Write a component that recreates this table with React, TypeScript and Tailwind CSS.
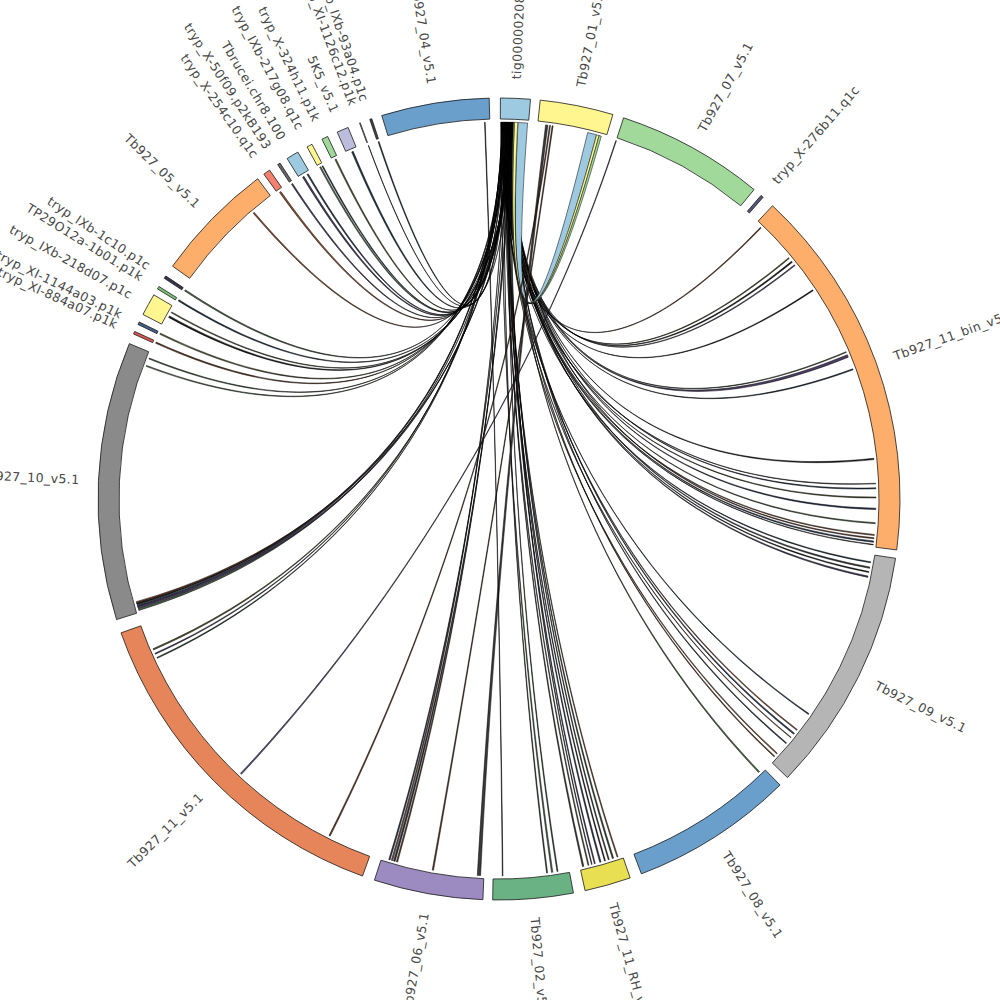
import React from "react";

// circos-style chord plot, everything drawn in one svg
const CX = 499;
const CY = 499;
const R_OUT = 401;
const R_IN = 380;
const R_LINK = 377;
const R_CTRL = 140;
const R_LABEL = 420;

interface Seg {
  a0: number;
  a1: number;
  fill: string;
  label: string;
}

const SEGS: Seg[] = [
  { a0: 0.2, a1: 4.5, fill: "#9ecae1", label: "tig00000208" },
  { a0: 5.9, a1: 16.5, fill: "#fff68f", label: "Tb927_01_v5.1" },
  { a0: 18.1, a1: 39.5, fill: "#a1d99b", label: "Tb927_07_v5.1" },
  { a0: 40.8, a1: 41.2, fill: "#55557a", label: "tryp_X-276b11.q1c" },
  { a0: 43.0, a1: 97.3, fill: "#fdae6b", label: "Tb927_11_bin_v5.1" },
  { a0: 98.5, a1: 134.0, fill: "#b5b5b5", label: "Tb927_09_v5.1" },
  { a0: 135.5, a1: 159.2, fill: "#6a9ecb", label: "Tb927_08_v5.1" },
  { a0: 160.9, a1: 167.6, fill: "#e9df52", label: "Tb927_11_RH_v5.1" },
  { a0: 169.3, a1: 180.9, fill: "#6ab283", label: "Tb927_02_v5.1" },
  { a0: 182.3, a1: 198.1, fill: "#9c8bc1", label: "Tb927_06_v5.1" },
  { a0: 199.9, a1: 250.5, fill: "#e6855a", label: "Tb927_11_v5.1" },
  { a0: 252.5, a1: 292.8, fill: "#8a8a8a", label: "Tb927_10_v5.1" },
  { a0: 294.3, a1: 294.7, fill: "#d9534f", label: "tryp_XI-884a07.p1k" },
  { a0: 295.8, a1: 296.2, fill: "#3f5f86", label: "tryp_XI-1144a03.p1k" },
  { a0: 297.4, a1: 300.6, fill: "#fff68f", label: "tryp_IXb-218d07.p1c" },
  { a0: 301.6, a1: 302.0, fill: "#7fbf7b", label: "TP29O12a-1b01.p1k" },
  { a0: 303.4, a1: 303.8, fill: "#33334d", label: "tryp_IXb-1c10.p1c" },
  { a0: 305.5, a1: 323.0, fill: "#fdae6b", label: "Tb927_05_v5.1" },
  { a0: 324.1, a1: 325.1, fill: "#f2806e", label: "tryp_X-254c10.q1c" },
  { a0: 326.5, a1: 326.9, fill: "#666666", label: "tryp_X-50f09.p2kB193" },
  { a0: 328.1, a1: 329.9, fill: "#9ecae1", label: "Tbrucei.chr8.100" },
  { a0: 331.4, a1: 332.2, fill: "#fff68f", label: "tryp_IXb-217g08.q1c" },
  { a0: 333.8, a1: 334.7, fill: "#a1d99b", label: "tryp_X-324h11.p1k" },
  { a0: 336.2, a1: 337.9, fill: "#bcbddc", label: "5K5_v5.1" },
  { a0: 339.65, a1: 339.75, fill: "#ffffff", label: "tryp_XI-1126c12.p1k" },
  { a0: 341.2, a1: 341.5, fill: "#444444", label: "tryp_IXb-93a04.p1c" },
  { a0: 343.0, a1: 358.6, fill: "#6a9ecb", label: "Tb927_04_v5.1" },
];

const FILLS = [
  "#1b1b1b",
  "#6b3a22",
  "#2e4a36",
  "#2a3a58",
  "#5c5a34",
  "#4b3d63",
  "#8a5030",
  "#3c3c3c",
  "#23374a",
  "#4f6b4a",
];

// far ends of the links that leave tig00000208: [angle, width]
const TIG_TARGETS: [number, number][] = [
  // Tb927_11_bin
  [43.9, 0.15], [50.2, 0.15], [50.9, 0.2], [51.6, 0.15], [56.3, 0.15],
  [67.0, 0.12], [67.5, 0.4], [69.8, 0.15], [83.8, 0.2], [87.6, 0.1],
  [88.3, 0.15], [89.7, 0.15], [91.4, 0.2], [93.6, 0.15], [95.4, 0.15],
  [95.9, 0.15], [96.4, 0.2], [96.9, 0.1],
  // Tb927_09
  [99.6, 0.15], [100.4, 0.2], [101.1, 0.15], [101.8, 0.2],
  [124.7, 0.15], [127.7, 0.15], [128.4, 0.2], [129.2, 0.1],
  [130.3, 0.15], [132.4, 0.15], [133.0, 0.15],
  // Tb927_08
  [136.3, 0.2],
  // Tb927_11_RH
  [161.6, 0.15], [162.3, 0.2], [163.0, 0.15], [163.6, 0.15],
  [164.3, 0.2], [165.2, 0.15], [165.7, 0.1], [166.2, 0.15], [167.0, 0.2],
  // Tb927_02
  [171.0, 0.15], [171.8, 0.2], [172.6, 0.15],
  // Tb927_06
  [195.6, 0.2], [196.0, 0.25], [196.4, 0.2], [196.8, 0.2],
  // Tb927_11
  [245.0, 0.15], [245.7, 0.15], [246.4, 0.2],
  // Tb927_10
  [252.8, 0.25], [253.1, 0.3], [253.4, 0.25], [253.7, 0.3],
  [254.0, 0.2], [290.6, 0.15], [291.8, 0.15],
  // small ones on the left
  [294.4, 0.2], [295.9, 0.2], [298.8, 0.25], [299.6, 0.15],
  [301.7, 0.2], [303.5, 0.2],
  // Tb927_05
  [319.3, 0.2],
  // small ones top left
  [324.4, 0.25], [326.6, 0.2], [328.6, 0.25], [329.4, 0.2],
  [331.6, 0.2], [332.0, 0.15], [334.2, 0.2], [337.0, 0.25],
  [339.7, 0.05], [341.3, 0.15],
];

// links that don't start on tig: [s0, s1, t0, t1, fill]
const OTHER_LINKS: [number, number, number, number, string][] = [
  [2.9, 4.35, 13.6, 15.0, "#9ecae1"],
  [2.35, 2.85, 15.0, 15.4, "#fff68f"],
  [2.2, 2.33, 15.4, 15.75, "#a1d99b"],
  [7.1, 7.45, 182.8, 183.3, "#3a3a3a"],
  [7.7, 7.85, 206.6, 206.8, "#6b3a22"],
  [8.1, 8.25, 190.0, 190.2, "#5a3a2a"],
  [18.05, 18.15, 223.1, 223.3, "#5a5080"],
  [357.8, 357.9, 179.4, 179.5, "#2a2a2a"],
];

const pt = (r: number, deg: number) => {
  const a = (deg * Math.PI) / 180;
  return [CX + r * Math.sin(a), CY - r * Math.cos(a)];
};

const P = (r: number, deg: number) => {
  const [x, y] = pt(r, deg);
  return `${x.toFixed(2)} ${y.toFixed(2)}`;
};

const segPath = (a0: number, a1: number) =>
  `M ${P(R_OUT, a0)} A ${R_OUT} ${R_OUT} 0 0 1 ${P(R_OUT, a1)} L ${P(R_IN, a1)} A ${R_IN} ${R_IN} 0 0 0 ${P(R_IN, a0)} Z`;

const linkPath = (s0: number, s1: number, t0: number, t1: number) =>
  `M ${P(R_LINK, s0)} A ${R_LINK} ${R_LINK} 0 0 1 ${P(R_LINK, s1)} ` +
  `C ${P(R_CTRL, s1)} ${P(R_CTRL, t0)} ${P(R_LINK, t0)} ` +
  `A ${R_LINK} ${R_LINK} 0 0 1 ${P(R_LINK, t1)} ` +
  `C ${P(R_CTRL, t1)} ${P(R_CTRL, s0)} ${P(R_LINK, s0)} Z`;

// small lcg so the order on tig is shuffled but stable
const buildTigLinks = () => {
  let seed = 17;
  const rnd = () => {
    seed = (seed * 1103515245 + 12345) % 2147483648;
    return seed / 2147483648;
  };
  const order = TIG_TARGETS.map((_, i) => i);
  for (let i = order.length - 1; i > 0; i--) {
    const j = Math.floor(rnd() * (i + 1));
    [order[i], order[j]] = [order[j], order[i]];
  }
  const start = 0.3;
  const step = (2.18 - start) / TIG_TARGETS.length;
  return order.map((ti, k) => {
    const [t, w] = TIG_TARGETS[ti];
    const s0 = start + k * step;
    return {
      d: linkPath(s0, s0 + step * 0.8, t, t + w),
      fill: FILLS[Math.floor(rnd() * FILLS.length)],
    };
  });
};

const Label = ({ seg }: { seg: Seg }) => {
  const mid = (seg.a0 + seg.a1) / 2;
  const [x, y] = pt(R_LABEL, mid);
  const right = mid < 180;
  const rot = right ? mid - 90 : mid + 90;
  return (
    <text
      x={x}
      y={y}
      transform={`rotate(${rot.toFixed(2)} ${x.toFixed(2)} ${y.toFixed(2)})`}
      textAnchor={right ? "start" : "end"}
      dominantBaseline="central"
      fontSize={12.5}
      letterSpacing={0.4}
      fill="#474747"
    >
      {seg.label}
    </text>
  );
};

const App = () => {
  const tigLinks = buildTigLinks();

  return (
    <div className="w-[1000px] h-[1000px] overflow-hidden bg-white font-['DejaVu_Sans',sans-serif]">
      <svg width={1000} height={1000} viewBox="0 0 1000 1000" className="block">
        <g strokeLinejoin="round">
          {tigLinks.map((l, i) => (
            <path key={`t${i}`} d={l.d} fill={l.fill} stroke="#000" strokeWidth={0.5} />
          ))}
          {OTHER_LINKS.map(([s0, s1, t0, t1, fill], i) => (
            <path
              key={`o${i}`}
              d={linkPath(s0, s1, t0, t1)}
              fill={fill}
              stroke="#000"
              strokeWidth={0.5}
            />
          ))}
        </g>

        <g>
          {SEGS.map((s) => (
            <path
              key={s.label}
              d={segPath(s.a0, s.a1)}
              fill={s.fill}
              stroke="#1a1a1a"
              strokeWidth={0.8}
            />
          ))}
        </g>

        <g style={{ fontFamily: "'DejaVu Sans', Verdana, sans-serif" }}>
          {SEGS.map((s) => (
            <Label key={s.label} seg={s} />
          ))}
        </g>
      </svg>
    </div>
  );
};

export default App;
